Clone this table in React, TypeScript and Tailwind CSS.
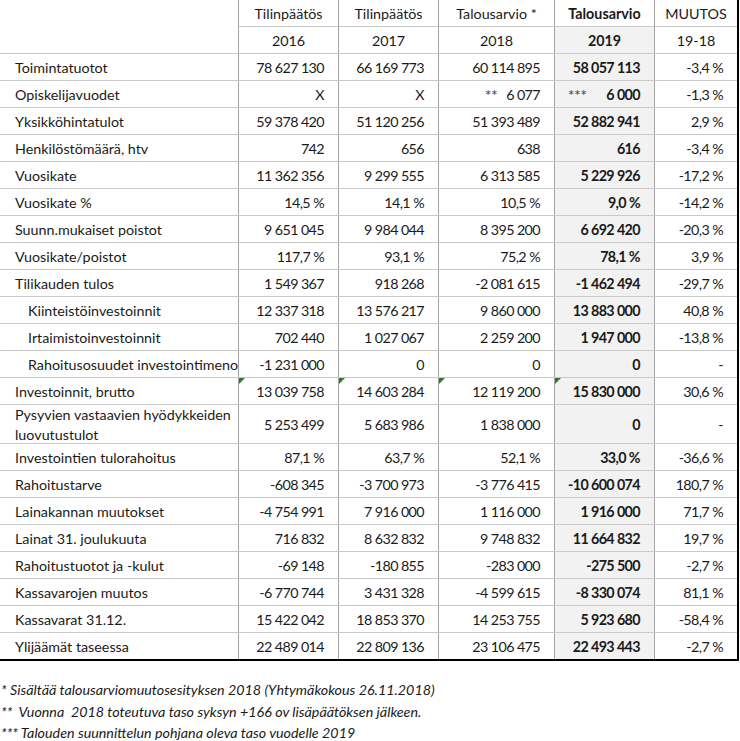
import type { ReactNode } from 'react';

type Row = {
  label: ReactNode;
  values: ReactNode[];
  indent?: boolean;
  tall?: boolean;
  marks?: boolean;
};

const rows: Row[] = [
  { label: 'Toimintatuotot', values: ['78 627 130', '66 169 773', '60 114 895', '58 057 113', '-3,4 %'] },
  {
    label: 'Opiskelijavuodet',
    values: [
      'X',
      'X',
      <><span className="mr-[9px] text-[16px] text-[#444]">**</span>6 077</>,
      <><span className="mr-[20px] text-[16px] font-normal text-[#444]">***</span>6 000</>,
      '-1,3 %',
    ],
  },
  { label: 'Yksikköhintatulot', values: ['59 378 420', '51 120 256', '51 393 489', '52 882 941', '2,9 %'] },
  { label: 'Henkilöstömäärä, htv', values: ['742', '656', '638', '616', '-3,4 %'] },
  { label: 'Vuosikate', values: ['11 362 356', '9 299 555', '6 313 585', '5 229 926', '-17,2 %'] },
  { label: 'Vuosikate %', values: ['14,5 %', '14,1 %', '10,5 %', '9,0 %', '-14,2 %'] },
  { label: 'Suunn.mukaiset poistot', values: ['9 651 045', '9 984 044', '8 395 200', '6 692 420', '-20,3 %'] },
  { label: 'Vuosikate/poistot', values: ['117,7 %', '93,1 %', '75,2 %', '78,1 %', '3,9 %'] },
  { label: 'Tilikauden tulos', values: ['1 549 367', '918 268', '-2 081 615', '-1 462 494', '-29,7 %'] },
  { label: 'Kiinteistöinvestoinnit', indent: true, values: ['12 337 318', '13 576 217', '9 860 000', '13 883 000', '40,8 %'] },
  { label: 'Irtaimistoinvestoinnit', indent: true, values: ['702 440', '1 027 067', '2 259 200', '1 947 000', '-13,8 %'] },
  { label: 'Rahoitusosuudet investointimeno', indent: true, values: ['-1 231 000', '0', '0', '0', '-'] },
  { label: 'Investoinnit, brutto', marks: true, values: ['13 039 758', '14 603 284', '12 119 200', '15 830 000', '30,6 %'] },
  {
    label: <>Pysyvien vastaavien hyödykkeiden<br />luovutustulot</>,
    tall: true,
    values: ['5 253 499', '5 683 986', '1 838 000', '0', '-'],
  },
  { label: 'Investointien tulorahoitus', values: ['87,1 %', '63,7 %', '52,1 %', '33,0 %', '-36,6 %'] },
  { label: 'Rahoitustarve', values: ['-608 345', '-3 700 973', '-3 776 415', '-10 600 074', '180,7 %'] },
  { label: 'Lainakannan muutokset', values: ['-4 754 991', '7 916 000', '1 116 000', '1 916 000', '71,7 %'] },
  { label: 'Lainat 31. joulukuuta', values: ['716 832', '8 632 832', '9 748 832', '11 664 832', '19,7 %'] },
  { label: 'Rahoitustuotot ja -kulut', values: ['-69 148', '-180 855', '-283 000', '-275 500', '-2,7 %'] },
  { label: 'Kassavarojen muutos', values: ['-6 770 744', '3 431 328', '-4 599 615', '-8 330 074', '81,1 %'] },
  { label: 'Kassavarat 31.12.', values: ['15 422 042', '18 853 370', '14 253 755', '5 923 680', '-58,4 %'] },
  { label: 'Ylijäämät taseessa', values: ['22 489 014', '22 809 136', '23 106 475', '22 493 443', '-2,7 %'] },
];

const gridCols = 'grid grid-cols-[238px_100px_100px_116px_100px_83px]';

function GreenMark() {
  return (
    <svg className="absolute left-0 top-0" width="6" height="6" viewBox="0 0 6 6">
      <polygon points="0,0 6,0 0,6" fill="#2f7a2a" />
    </svg>
  );
}

export default function App() {
  return (
    <div
      className="w-[740px] bg-white text-[#1a1a1a] text-[14.3px]"
      style={{ fontFamily: 'Lato, "Noto Sans", sans-serif' }}
    >
      <div className="w-[739px] border-r-2 border-black">
        {/* header row 1 */}
        <div className={`${gridCols} h-[27px]`}>
          <div />
          {['Tilinpäätös', 'Tilinpäätös', 'Talousarvio *', 'Talousarvio', 'MUUTOS'].map((h, i) => (
            <div
              key={i}
              className={`flex items-center justify-center pt-[1px] border-l border-b border-l-[#a3a3a3] border-b-[#c9c9c9] ${
                i === 3 ? 'font-bold' : ''
              }`}
            >
              {h}
            </div>
          ))}
        </div>
        {/* header row 2 */}
        <div className={`${gridCols} h-[27px] border-b border-[#c9c9c9]`}>
          <div />
          {['2016', '2017', '2018', '2019', '19-18'].map((h, i) => (
            <div
              key={i}
              className={`flex items-center justify-center pt-[1px] border-l border-[#a3a3a3] ${
                i === 3 ? 'font-bold bg-[#f2f2f2]' : ''
              }`}
            >
              {h}
            </div>
          ))}
        </div>

        {rows.map((row, r) => {
          const last = r === rows.length - 1;
          return (
            <div
              key={r}
              className={`${gridCols} ${row.tall ? 'h-[39px]' : last ? 'h-[28px]' : 'h-[27px]'} ${
                last ? 'border-b-2 border-black' : 'border-b border-[#c9c9c9]'
              }`}
            >
              <div
                className={`flex items-center pt-[2px] whitespace-nowrap overflow-hidden ${
                  row.indent ? 'pl-[28px]' : 'pl-[15px]'
                } ${row.tall ? 'leading-[20px]' : ''}`}
              >
                <span>{row.label}</span>
              </div>
              {row.values.map((v, i) => (
                <div
                  key={i}
                  className={`relative flex items-center justify-end pt-[2px] pr-[14px] whitespace-nowrap border-l border-[#a3a3a3] tracking-[-0.6px] ${
                    i === 3 ? 'font-bold bg-[#f2f2f2]' : ''
                  }`}
                >
                  {row.marks && i < 4 && <GreenMark />}
                  {v}
                </div>
              ))}
            </div>
          );
        })}
      </div>

      <div className="mt-[18px] pl-[1px] italic leading-[21.5px] whitespace-pre">
        <div>* Sisältää talousarviomuutosesityksen 2018 (Yhtymäkokous 26.11.2018)</div>
        <div>**  Vuonna  2018 toteutuva taso syksyn +166 ov lisäpäätöksen jälkeen.</div>
        <div>*** Talouden suunnittelun pohjana oleva taso vuodelle 2019</div>
      </div>
    </div>
  );
}
